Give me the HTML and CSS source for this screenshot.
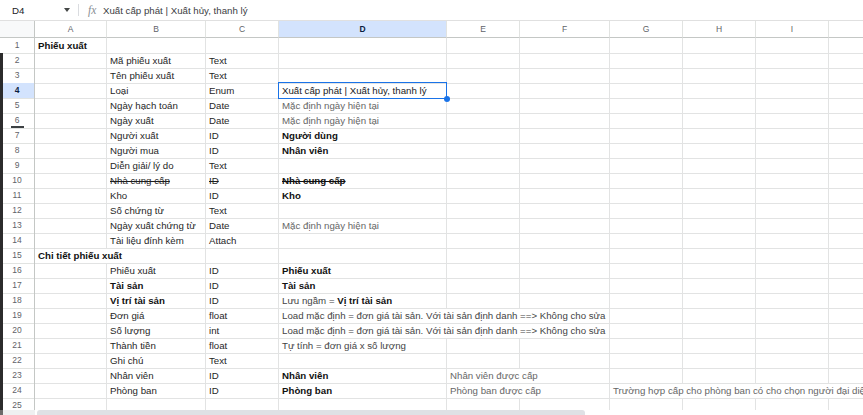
FILE: index.html
```html
<!DOCTYPE html>
<html lang="vi">
<head>
<meta charset="utf-8">
<title>Phiếu xuất</title>
<link rel="stylesheet" href="styles.css">
</head>
<body>
<div class="formula-bar">
  <div class="name-box">D4</div>
  <div class="name-arrow"></div>
  <div class="sep"></div>
  <div class="fx">fx</div>
  <div class="formula-text">Xuất cấp phát | Xuất hủy, thanh lý</div>
</div>

<div class="row head">
  <div class="corner"></div>
  <div class="colhead">A</div><div class="colhead">B</div><div class="colhead">C</div>
  <div class="colhead active">D</div><div class="colhead">E</div><div class="colhead">F</div>
  <div class="colhead">G</div><div class="colhead">H</div><div class="colhead">I</div><div class="colhead last"></div>
</div>

<div class="rows">
  <div class="row"><div class="rowhead top">1</div><div class="cell b">Phiếu xuất</div><div class="cell"></div><div class="cell"></div><div class="cell"></div><div class="cell"></div><div class="cell"></div><div class="cell"></div><div class="cell"></div><div class="cell"></div><div class="cell"></div></div>
  <div class="row"><div class="rowhead">2</div><div class="cell"></div><div class="cell">Mã phiếu xuất</div><div class="cell">Text</div><div class="cell"></div><div class="cell"></div><div class="cell"></div><div class="cell"></div><div class="cell"></div><div class="cell"></div><div class="cell"></div></div>
  <div class="row"><div class="rowhead">3</div><div class="cell"></div><div class="cell">Tên phiếu xuất</div><div class="cell">Text</div><div class="cell"></div><div class="cell"></div><div class="cell"></div><div class="cell"></div><div class="cell"></div><div class="cell"></div><div class="cell"></div></div>
  <div class="row"><div class="rowhead active">4</div><div class="cell"></div><div class="cell">Loại</div><div class="cell">Enum</div><div class="cell selected">Xuất cấp phát | Xuất hủy, thanh lý</div><div class="cell"></div><div class="cell"></div><div class="cell"></div><div class="cell"></div><div class="cell"></div><div class="cell"></div></div>
  <div class="row"><div class="rowhead">5</div><div class="cell"></div><div class="cell">Ngày hạch toán</div><div class="cell">Date</div><div class="cell muted">Mặc định ngày hiện tại</div><div class="cell"></div><div class="cell"></div><div class="cell"></div><div class="cell"></div><div class="cell"></div><div class="cell"></div></div>
  <div class="row"><div class="rowhead grip">6</div><div class="cell"></div><div class="cell">Ngày xuất</div><div class="cell">Date</div><div class="cell muted">Mặc định ngày hiện tại</div><div class="cell"></div><div class="cell"></div><div class="cell"></div><div class="cell"></div><div class="cell"></div><div class="cell"></div></div>
  <div class="row"><div class="rowhead">7</div><div class="cell"></div><div class="cell">Người xuất</div><div class="cell">ID</div><div class="cell b">Người dùng</div><div class="cell"></div><div class="cell"></div><div class="cell"></div><div class="cell"></div><div class="cell"></div><div class="cell"></div></div>
  <div class="row"><div class="rowhead">8</div><div class="cell"></div><div class="cell">Người mua</div><div class="cell">ID</div><div class="cell b">Nhân viên</div><div class="cell"></div><div class="cell"></div><div class="cell"></div><div class="cell"></div><div class="cell"></div><div class="cell"></div></div>
  <div class="row"><div class="rowhead">9</div><div class="cell"></div><div class="cell">Diễn giải/ lý do</div><div class="cell">Text</div><div class="cell"></div><div class="cell"></div><div class="cell"></div><div class="cell"></div><div class="cell"></div><div class="cell"></div><div class="cell"></div></div>
  <div class="row"><div class="rowhead">10</div><div class="cell"></div><div class="cell strike">Nhà cung cấp</div><div class="cell strike">ID</div><div class="cell b strike">Nhà cung cấp</div><div class="cell"></div><div class="cell"></div><div class="cell"></div><div class="cell"></div><div class="cell"></div><div class="cell"></div></div>
  <div class="row"><div class="rowhead">11</div><div class="cell"></div><div class="cell">Kho</div><div class="cell">ID</div><div class="cell b">Kho</div><div class="cell"></div><div class="cell"></div><div class="cell"></div><div class="cell"></div><div class="cell"></div><div class="cell"></div></div>
  <div class="row"><div class="rowhead">12</div><div class="cell"></div><div class="cell">Số chứng từ</div><div class="cell">Text</div><div class="cell"></div><div class="cell"></div><div class="cell"></div><div class="cell"></div><div class="cell"></div><div class="cell"></div><div class="cell"></div></div>
  <div class="row"><div class="rowhead">13</div><div class="cell"></div><div class="cell">Ngày xuất chứng từ</div><div class="cell">Date</div><div class="cell muted">Mặc định ngày hiện tại</div><div class="cell"></div><div class="cell"></div><div class="cell"></div><div class="cell"></div><div class="cell"></div><div class="cell"></div></div>
  <div class="row"><div class="rowhead">14</div><div class="cell"></div><div class="cell">Tài liệu đính kèm</div><div class="cell">Attach</div><div class="cell"></div><div class="cell"></div><div class="cell"></div><div class="cell"></div><div class="cell"></div><div class="cell"></div><div class="cell"></div></div>
  <div class="row"><div class="rowhead">15</div><div class="cell b s2">Chi tiết phiếu xuất</div><div class="cell"></div><div class="cell"></div><div class="cell"></div><div class="cell"></div><div class="cell"></div><div class="cell"></div><div class="cell"></div><div class="cell"></div></div>
  <div class="row"><div class="rowhead">16</div><div class="cell"></div><div class="cell">Phiếu xuất</div><div class="cell">ID</div><div class="cell b">Phiếu xuất</div><div class="cell"></div><div class="cell"></div><div class="cell"></div><div class="cell"></div><div class="cell"></div><div class="cell"></div></div>
  <div class="row"><div class="rowhead">17</div><div class="cell"></div><div class="cell b">Tài sản</div><div class="cell">ID</div><div class="cell b">Tài sản</div><div class="cell"></div><div class="cell"></div><div class="cell"></div><div class="cell"></div><div class="cell"></div><div class="cell"></div></div>
  <div class="row"><div class="rowhead">18</div><div class="cell"></div><div class="cell b">Vị trí tài sản</div><div class="cell">ID</div><div class="cell soft">Lưu ngầm = <b class="dark">Vị trí tài sản</b></div><div class="cell"></div><div class="cell"></div><div class="cell"></div><div class="cell"></div><div class="cell"></div><div class="cell"></div></div>
  <div class="row"><div class="rowhead">19</div><div class="cell"></div><div class="cell">Đơn giá</div><div class="cell">float</div><div class="cell soft s3">Load mặc định = đơn giá tài sản. Với tài sản định danh ==&gt; Không cho sửa</div><div class="cell"></div><div class="cell"></div><div class="cell"></div><div class="cell"></div></div>
  <div class="row"><div class="rowhead">20</div><div class="cell"></div><div class="cell">Số lượng</div><div class="cell">int</div><div class="cell soft s3">Load mặc định = đơn giá tài sản. Với tài sản định danh ==&gt; Không cho sửa</div><div class="cell"></div><div class="cell"></div><div class="cell"></div><div class="cell"></div></div>
  <div class="row"><div class="rowhead">21</div><div class="cell"></div><div class="cell">Thành tiền</div><div class="cell">float</div><div class="cell soft">Tự tính = đơn giá x số lượng</div><div class="cell"></div><div class="cell"></div><div class="cell"></div><div class="cell"></div><div class="cell"></div><div class="cell"></div></div>
  <div class="row"><div class="rowhead">22</div><div class="cell"></div><div class="cell">Ghi chú</div><div class="cell">Text</div><div class="cell"></div><div class="cell"></div><div class="cell"></div><div class="cell"></div><div class="cell"></div><div class="cell"></div><div class="cell"></div></div>
  <div class="row"><div class="rowhead">23</div><div class="cell"></div><div class="cell">Nhân viên</div><div class="cell">ID</div><div class="cell b">Nhân viên</div><div class="cell muted s2">Nhân viên được cấp</div><div class="cell"></div><div class="cell"></div><div class="cell"></div><div class="cell"></div></div>
  <div class="row"><div class="rowhead">24</div><div class="cell"></div><div class="cell">Phòng ban</div><div class="cell">ID</div><div class="cell b">Phòng ban</div><div class="cell muted s2">Phòng ban được cấp</div><div class="cell muted s4">Trường hợp cấp cho phòng ban có cho chọn người đại diện</div></div>
  <div class="row"><div class="rowhead">25</div><div class="cell"></div><div class="cell"></div><div class="cell"></div><div class="cell"></div><div class="cell"></div><div class="cell"></div><div class="cell"></div><div class="cell"></div><div class="cell"></div><div class="cell"></div></div>
</div>

<div class="scrollbar">
  <div class="sb-corner"></div>
  <div class="sb-thumb"></div>
</div>
</body>
</html>
```

FILE: styles.css
```css
* { box-sizing: border-box; }

html, body {
  margin: 0;
  padding: 0;
}

body {
  width: 863px;
  height: 415px;
  overflow: hidden;
  background: #fff;
  color: #202124;
  font-family: "Liberation Sans", Arial, sans-serif;
  display: flex;
  flex-direction: column;
}

/* formula bar */
.formula-bar {
  flex: none;
  height: 21px;
  display: flex;
  align-items: center;
  border-bottom: 1px solid #e0e0e0;
  font-size: 9.7px;
}
.name-box {
  width: 64px;
  padding-left: 12px;
  color: #202124;
}
.name-arrow {
  width: 0;
  height: 0;
  border-left: 3px solid transparent;
  border-right: 3px solid transparent;
  border-top: 4px solid #444746;
}
.sep {
  width: 1px;
  height: 12px;
  background: #dadce0;
  margin: 0 9px 0 8px;
}
.fx {
  width: 15px;
  font-family: "Liberation Serif", serif;
  font-style: italic;
  font-size: 11.5px;
  color: #8a8f94;
}
.formula-text {
  color: #3c4043;
}

/* grid */
.row {
  flex: none;
  display: grid;
  grid-template-columns: 35px 72px 99px 73px 168px 73px 90px 73px 73px 73px 1fr;
  height: 15px;
}
.head {
  height: 17px;
}
.rows {
  flex: 1;
  min-height: 0;
  overflow: hidden;
  display: flex;
  flex-direction: column;
}

.corner {
  background: #f8f9fa;
  border-right: 1px solid #c4c7c5;
  border-bottom: 1px solid #c4c7c5;
}
.colhead {
  border-right: 1px solid #e1e3e1;
  border-bottom: 1px solid #c4c7c5;
  text-align: center;
  font-size: 8.5px;
  line-height: 16px;
  color: #5f6368;
}
.colhead.active {
  background: #d3e3fd;
  color: #0b1d3f;
  font-weight: bold;
}
.colhead.last { border-right: none; }

.rowhead {
  border-right: 1px solid #c4c7c5;
  border-bottom: 1px solid #e1e3e1;
  text-align: center;
  font-size: 8.5px;
  line-height: 15px;
  color: #5f6368;
  box-shadow: inset 3px 0 0 #2b2b2b;
}
.rowhead.top { box-shadow: none; }
.rowhead.active {
  background-color: #d3e3fd;
  color: #0b1d3f;
  font-weight: bold;
}
.rowhead.grip {
  background: linear-gradient(#3c4043, #3c4043) no-repeat 11px 100% / 13px 2px;
}

.cell {
  border-right: 1px solid #e2e3e3;
  border-bottom: 1px solid #e2e3e3;
  padding: 0 3px;
  font-size: 9.7px;
  line-height: 15px;
  white-space: nowrap;
  overflow: hidden;
  color: #1f1f1f;
}
.row > .cell:last-child { border-right: none; }

.b { font-weight: bold; color: #111; }
.dark { color: #111; }
.strike { text-decoration: line-through; }
.muted { color: #666; }
.soft { color: #444; }

.s2 { grid-column: span 2; }
.s3 { grid-column: span 3; }
.s4 { grid-column: span 4; }

.selected {
  position: relative;
  overflow: visible;
  color: #202124;
}
.selected::before {
  content: "";
  position: absolute;
  left: -1px;
  top: -1px;
  right: -1px;
  bottom: -1px;
  border: 1.5px solid #1a73e8;
}
.selected::after {
  content: "";
  position: absolute;
  right: -4px;
  bottom: -4px;
  width: 6px;
  height: 6px;
  border-radius: 50%;
  background: #1a73e8;
  z-index: 2;
}

/* horizontal scrollbar */
.scrollbar {
  flex: none;
  height: 5px;
  display: flex;
}
.sb-corner {
  width: 35px;
  background: #eef0f1;
  box-shadow: inset 3px 0 0 #6b6b6b;
}
.sb-thumb {
  width: 548px;
  margin-left: 2px;
  background: #dfe1e5;
  border-radius: 3px 3px 0 0;
}
```
